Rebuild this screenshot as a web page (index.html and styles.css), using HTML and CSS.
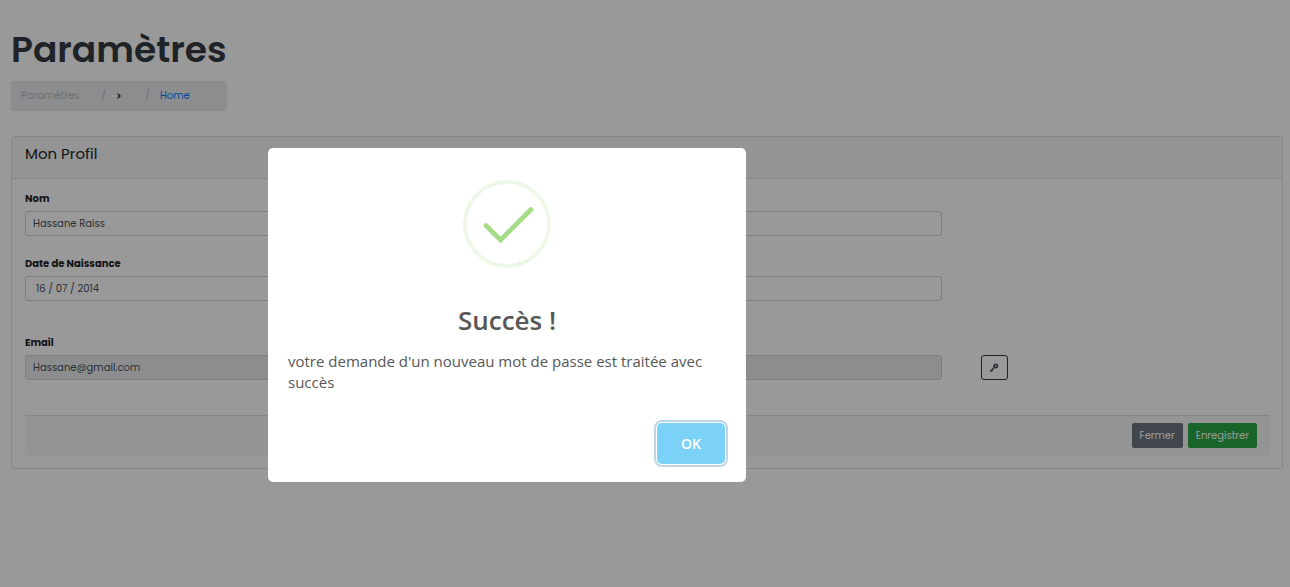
FILE: index.html
```html
<!DOCTYPE html>
<html lang="fr">
<head>
<meta charset="utf-8">
<title>Paramètres</title>
<link rel="stylesheet" href="styles.css">
</head>
<body>
<main class="page">
  <header class="page-head">
    <h1 class="title">Paramètres</h1>
    <nav class="breadcrumb" aria-label="Fil d'Ariane">
      <span class="crumb-current">Paramètres</span>
      <span class="crumb-sep">/</span>
      <svg class="crumb-arrow" width="4" height="6" viewBox="0 0 4 6"><path d="M.7.700 3 3 .7 5.300" fill="none" stroke="#212529" stroke-width="1.300"/></svg>
      <span class="crumb-sep">/</span>
      <a class="crumb-link" href="#">Home</a>
    </nav>
  </header>
  <section class="card">
    <h2 class="card-head">Mon Profil</h2>
    <form class="card-body">
      <div class="row">
        <div class="field">
          <label for="nom">Nom</label>
          <input class="control" id="nom" type="text" value="Hassane Raiss">
        </div>
      </div>
      <div class="row row-date">
        <div class="field">
          <label for="naissance">Date de Naissance</label>
          <input class="control control-date" id="naissance" type="text" value="16 / 07 / 2014">
        </div>
      </div>
      <div class="row row-email">
        <div class="field">
          <label for="email">Email</label>
          <input class="control control-readonly" id="email" type="email" value="Hassane@gmail.com" readonly>
        </div>
        <div class="row-action">
          <button class="key-button" type="button" aria-label="Nouveau mot de passe">
            <svg width="10" height="10" viewBox="0 0 10 10"><circle cx="6.700" cy="3" r="1.600" fill="none" stroke="#4d565f" stroke-width="1.800"/><path d="M5.400 4.300 1.200 8.500M2.200 7.500l1 1M3.400 6.300l1 1" fill="none" stroke="#4d565f" stroke-width="1.300"/></svg>
          </button>
        </div>
      </div>
      <div class="form-foot">
        <button class="btn btn-close" type="button">Fermer</button>
        <button class="btn btn-save" type="button">Enregistrer</button>
      </div>
    </form>
  </section>
</main>
<div class="overlay">
  <div class="modal" role="dialog" aria-modal="true" aria-labelledby="modal-title">
    <svg class="success" width="88" height="88" viewBox="0 0 88 88">
      <circle cx="44" cy="44" r="42" fill="none" stroke="#edf8e7" stroke-width="4"/>
      <path d="m5 24 3 3M3 29l3 3M56 82l3 3M61 80l3 3" stroke="#c5e6b4" stroke-width="1" stroke-dasharray="1 1"/>
      <path d="M23 45.500 37.500 60 68 29.500" fill="none" stroke="#a5dc86" stroke-width="4.600" stroke-linecap="round"/>
    </svg>
    <h2 class="modal-title" id="modal-title">Succès !</h2>
    <p class="modal-text">votre demande d'un nouveau mot de passe est traitée avec succès</p>
    <div class="modal-foot"><button class="ok" type="button">OK</button></div>
  </div>
</div>
</body>
</html>
```
FILE: styles.css
```css
* { box-sizing: border-box; }
body {
  margin: 0;
  background: #fff;
  color: #212529;
  font-family: Poppins, Inter, sans-serif;
  font-size: 10px;
  line-height: 16px;
}
button, input { font: inherit; }
.page { padding: 25px 7px 0 11px; }
.page-head { width: fit-content; }
.title {
  margin: 0 0 6px;
  color: #343a40;
  font-size: 36px;
  font-weight: 600;
  line-height: 50px;
}
.breadcrumb {
  display: flex;
  align-items: center;
  height: 30px;
  padding: 0 10px;
  border-radius: 3px;
  background: #e9ecef;
}
.crumb-current { color: #b8bbbe; }
.crumb-sep { margin-left: 22px; color: #b8bbbe; }
.crumb-arrow { margin-left: 11px; }
.crumb-sep + .crumb-arrow + .crumb-sep { margin-left: 24px; }
.crumb-link {
  margin-left: 10px;
  color: #007bff;
  text-decoration: none;
}
.card {
  margin-top: 25px;
  border: 1px solid #dfdfdf;
  border-radius: 3px;
}
.card-head {
  margin: 0;
  padding: 7px 13px 14px;
  border-bottom: 1px solid #dfdfdf;
  background: #f7f7f7;
  font-size: 15px;
  font-weight: 400;
  line-height: 20px;
}
.card-body { padding: 12px 12px 13px 13px; }
.row {
  display: grid;
  grid-template-columns: 3fr 1fr;
  gap: 23px;
  align-items: end;
}
.row-date { margin-top: 20px; }
.row-email { margin-top: 34px; }
.field {
  display: flex;
  flex-direction: column;
  gap: 4px;
}
.field label { font-weight: 700; }
.control {
  width: 100%;
  height: 25px;
  padding: 0 7px;
  border: 1px solid #ced4da;
  border-radius: 3px;
  background: #fff;
  color: #495057;
}
.control-date { padding-left: 10px; }
.control-readonly { background: #e9ecef; }
.row-action { padding-left: 16px; }
.key-button {
  display: flex;
  align-items: center;
  justify-content: center;
  width: 27px;
  height: 25px;
  padding: 0;
  border: 1px solid #343a40;
  border-radius: 3px;
  background: transparent;
}
.form-foot {
  display: flex;
  justify-content: flex-end;
  gap: 5px;
  margin-top: 35px;
  padding: 7px 13px;
  border-top: 1px solid #dfdfdf;
  background: #f7f7f7;
}
.btn {
  height: 25px;
  padding: 0 8px;
  border: 0;
  border-radius: 2px;
  color: #fff;
}
.btn-close { background: #6c757d; }
.btn-save { background: #28a745; }
.overlay {
  position: fixed;
  inset: 0;
  display: flex;
  align-items: center;
  justify-content: center;
  padding: 43px 276px 0 0;
  background: rgba(0, 0, 0, 0.4);
}
.modal {
  width: 478px;
  padding-top: 32px;
  border-radius: 5px;
  background: #fff;
  color: #575757;
  font-family: "Segoe UI", "Open Sans", sans-serif;
}
.success {
  display: block;
  margin: 0 auto;
}
.modal-title {
  margin: 33px 0 0;
  font-size: 26px;
  font-weight: 600;
  line-height: 38px;
  text-align: center;
}
.modal-text {
  margin: 12px 20px 0;
  font-size: 15px;
  line-height: 21px;
}
.modal-foot {
  display: flex;
  justify-content: flex-end;
  margin-top: 30px;
  padding: 0 21px 18px;
}
.ok {
  height: 41px;
  padding: 0 24px;
  border: 0;
  border-radius: 5px;
  background: #7cd1f9;
  box-shadow: 0 0 0 1px #fff, 0 0 0 3px #bfd5e6;
  color: #fff;
  font-size: 14px;
  font-weight: 600;
}
```
